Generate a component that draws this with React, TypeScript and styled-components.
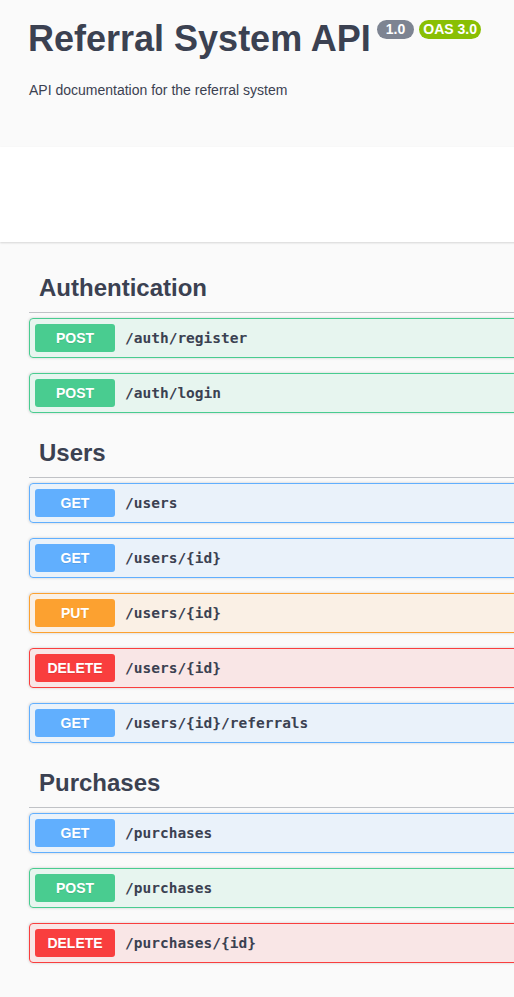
import React from "react";
import styled, { createGlobalStyle } from "styled-components";

const GlobalStyle = createGlobalStyle`
  html, body {
    margin: 0;
    padding: 0;
    background: #fafafa;
    overflow-x: hidden;
  }
  body {
    font-family: "Liberation Sans", Arial, sans-serif;
    color: #3b4151;
  }
`;

type Method = "GET" | "POST" | "PUT" | "DELETE";

const colors: Record<Method, string> = {
  GET: "#61affe",
  POST: "#49cc90",
  PUT: "#fca130",
  DELETE: "#f93e3e",
};

const bgs: Record<Method, string> = {
  GET: "rgba(97,175,254,.1)",
  POST: "rgba(73,204,144,.1)",
  PUT: "rgba(252,161,48,.1)",
  DELETE: "rgba(249,62,62,.1)",
};

const Page = styled.div`
  min-width: 620px;
`;

const Info = styled.section`
  background: #fafafa;
  padding: 18px 0 49px 29px;
`;

const TitleRow = styled.div`
  display: flex;
  align-items: flex-start;
`;

const Title = styled.h2`
  margin: 0 0 0 -1px;
  font-size: 36px;
  line-height: 41px;
  font-weight: 700;
  color: #3b4151;
`;

const Badge = styled.span<{ $bg: string; $pad: number; $ml: number }>`
  display: inline-block;
  margin: 2px 0 0 ${(p) => p.$ml}px;
  height: 19px;
  line-height: 19px;
  padding: 0 ${(p) => p.$pad}px;
  border-radius: 57px;
  background: ${(p) => p.$bg};
  color: #fff;
  font-size: 14px;
  font-weight: 700;
`;

const Description = styled.p`
  margin: 23px 0 0 0;
  font-size: 14px;
  line-height: 16px;
  color: #3b4151;
`;

const SchemeContainer = styled.div`
  background: #fff;
  height: 95px;
  box-shadow: 0 1px 2px 0 rgba(0, 0, 0, 0.15);
  margin-bottom: 21px;
`;

const Wrapper = styled.div`
  padding: 0 0 40px 29px;
`;

const TagSection = styled.section`
  display: flex;
  flex-direction: column;
`;

const TagHeading = styled.h3`
  margin: 0 0 5px 0;
  padding: 10px 20px 10px 10px;
  font-size: 24px;
  line-height: 29px;
  font-weight: 700;
  color: #3b4151;
  border-bottom: 1px solid rgba(59, 65, 81, 0.3);
`;

const OpBlock = styled.div<{ $method: Method }>`
  display: flex;
  align-items: center;
  box-sizing: border-box;
  height: 40px;
  margin: 0 0 15px 0;
  padding: 0 5px;
  border: 1px solid ${(p) => colors[p.$method]};
  border-radius: 4px;
  background: ${(p) => bgs[p.$method]};
  box-shadow: 0 0 3px rgba(0, 0, 0, 0.19);
`;

const MethodTag = styled.span<{ $method: Method }>`
  display: flex;
  align-items: center;
  justify-content: center;
  width: 80px;
  height: 28px;
  border-radius: 3px;
  background: ${(p) => colors[p.$method]};
  color: #fff;
  font-size: 14px;
  font-weight: 700;
  text-shadow: 0 1px 0 rgba(0, 0, 0, 0.1);
`;

const Path = styled.span`
  padding: 0 10px;
  font-family: "DejaVu Sans Mono", "Liberation Mono", monospace;
  font-size: 14.5px;
  font-weight: 700;
  color: #3b4151;
`;

const sections: { name: string; ops: { method: Method; path: string }[] }[] = [
  {
    name: "Authentication",
    ops: [
      { method: "POST", path: "/auth/register" },
      { method: "POST", path: "/auth/login" },
    ],
  },
  {
    name: "Users",
    ops: [
      { method: "GET", path: "/users" },
      { method: "GET", path: "/users/{id}" },
      { method: "PUT", path: "/users/{id}" },
      { method: "DELETE", path: "/users/{id}" },
      { method: "GET", path: "/users/{id}/referrals" },
    ],
  },
  {
    name: "Purchases",
    ops: [
      { method: "GET", path: "/purchases" },
      { method: "POST", path: "/purchases" },
      { method: "DELETE", path: "/purchases/{id}" },
    ],
  },
];

export default function App() {
  return (
    <Page>
      <GlobalStyle />
      <Info>
        <TitleRow>
          <Title>Referral System API</Title>
          <Badge $bg="#7d8492" $pad={9} $ml={6}>
            1.0
          </Badge>
          <Badge $bg="#89bf04" $pad={4} $ml={5}>
            OAS 3.0
          </Badge>
        </TitleRow>
        <Description>API documentation for the referral system</Description>
      </Info>
      <SchemeContainer />
      <Wrapper>
        {sections.map((s) => (
          <TagSection key={s.name}>
            <TagHeading>{s.name}</TagHeading>
            {s.ops.map((op, i) => (
              <OpBlock key={i} $method={op.method}>
                <MethodTag $method={op.method}>{op.method}</MethodTag>
                <Path>{op.path}</Path>
              </OpBlock>
            ))}
          </TagSection>
        ))}
      </Wrapper>
    </Page>
  );
}
